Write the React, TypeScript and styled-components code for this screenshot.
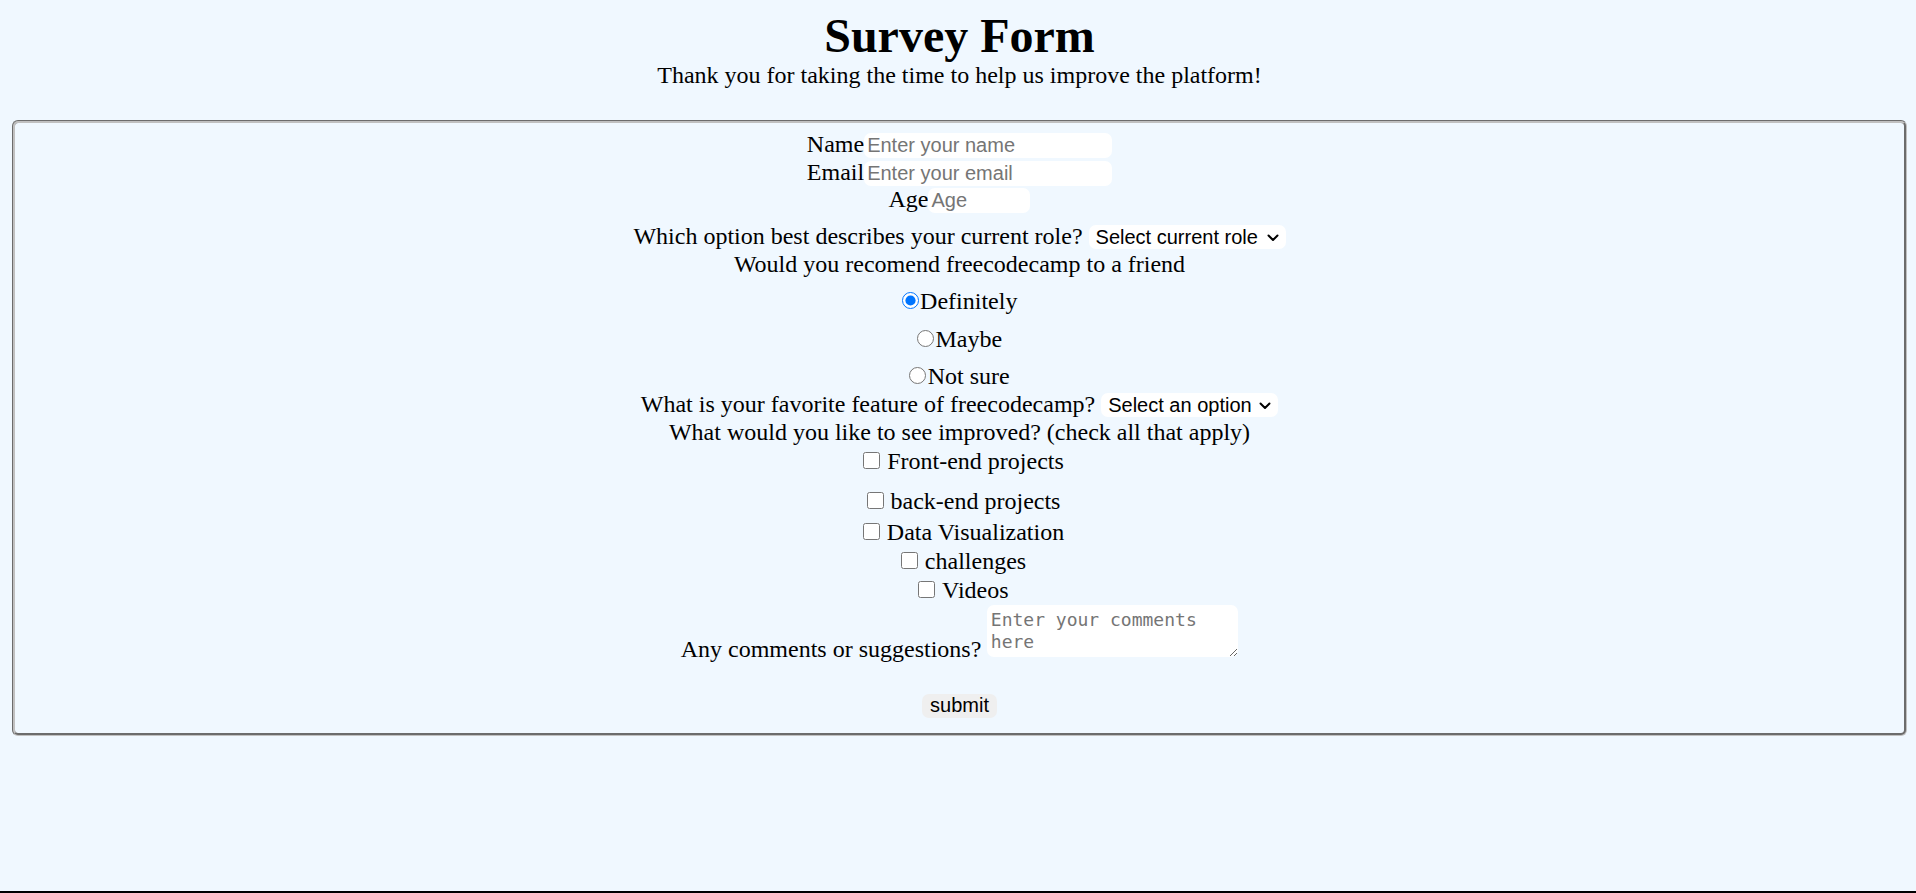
import React from "react";
import styled, { createGlobalStyle } from "styled-components";

const GlobalStyle = createGlobalStyle`
  html, body {
    margin: 0;
    padding: 0;
    background: #f0f8ff;
  }
  body {
    font-family: "Liberation Serif", "Times New Roman", serif;
    color: #000;
  }
  *, *::before, *::after {
    box-sizing: border-box;
  }
`;

const Page = styled.div`
  min-height: 100vh;
  padding: 9px 9px 0 12px;
  border-bottom: 2px solid #000;
  text-align: center;
`;

const Title = styled.h1`
  margin: 0;
  font-size: 48px;
  line-height: 53px;
  font-weight: 700;
`;

const Description = styled.p`
  margin: 0 0 30.4px;
  font-size: 24px;
  line-height: 27.6px;
`;

const Form = styled.form`
  margin: 0;
`;

const Fieldset = styled.fieldset`
  margin: 0;
  min-width: 0;
  padding: 8px 18px 14.4px;
  border: 3px groove #c0c0c0;
  border-radius: 6px;
  font-size: 24px;
  line-height: 27.6px;
  text-align: center;
`;

const FieldRow = styled.div`
  white-space: nowrap;
`;

const QuestionRow = styled.div<{ $top?: number }>`
  margin-top: ${(p) => p.$top ?? 0}px;
  white-space: nowrap;
`;

const Prompt = styled.div``;

const RadioRow = styled.div`
  padding-top: 10px;
`;

const CheckRow = styled.div<{ $before?: number; $after: number }>`
  margin-top: ${(p) => p.$before ?? 0}px;
  margin-bottom: ${(p) => p.$after}px;
`;

const CommentRow = styled.div`
  white-space: nowrap;
`;

const SubmitRow = styled.div`
  margin-top: 28.3px;
`;

const TextInput = styled.input<{ $w: number }>`
  width: ${(p) => p.$w}px;
  height: 25px;
  margin: 0;
  padding: 0 3px;
  border: none;
  border-radius: 7px;
  background: #fff;
  font-family: "Liberation Sans", Arial, sans-serif;
  font-size: 20px;
  color: #000;
  vertical-align: baseline;
  outline: none;
  &::placeholder {
    color: #757575;
  }
`;

const SelectWrap = styled.span`
  position: relative;
  display: inline-block;
  vertical-align: baseline;
`;

const Select = styled.select<{ $w: number }>`
  appearance: none;
  -webkit-appearance: none;
  width: ${(p) => p.$w}px;
  height: 24px;
  margin: 0;
  padding: 0 24px 0 7px;
  border: none;
  border-radius: 7px;
  background: #fff;
  font-family: "Liberation Sans", Arial, sans-serif;
  font-size: 20px;
  color: #000;
  vertical-align: baseline;
`;

const Chevron = styled.svg`
  position: absolute;
  right: 7px;
  top: 50%;
  width: 12px;
  height: 8px;
  margin-top: -3px;
  pointer-events: none;
`;

const Radio = styled.input`
  width: 17px;
  height: 17px;
  margin: 0 1.5px 1px 0;
  vertical-align: baseline;
`;

const Checkbox = styled.input`
  width: 17px;
  height: 17px;
  margin: 0 1px 0 8px;
  vertical-align: baseline;
`;

const Comments = styled.textarea`
  width: 251px;
  height: 52px;
  margin: 0;
  padding: 4px 3.5px;
  border: none;
  border-radius: 7px;
  background: #fff;
  font-family: "DejaVu Sans Mono", "Liberation Mono", monospace;
  font-size: 18px;
  line-height: 22px;
  vertical-align: baseline;
  &::placeholder {
    color: #757575;
  }
`;

const SubmitButton = styled.button`
  height: 24px;
  margin: 0;
  padding: 0 8.5px;
  border: none;
  border-radius: 7px;
  background: #efefef;
  font-family: "Liberation Sans", Arial, sans-serif;
  font-size: 20px;
  color: #000;
  vertical-align: baseline;
`;

const radios = [
  { label: "Definitely", checked: true },
  { label: "Maybe", checked: false },
  { label: "Not sure", checked: false },
];

const improvements = [
  { label: "Front-end projects", before: 2, after: 11.8 },
  { label: "back-end projects", before: 0, after: 3.4 },
  { label: "Data Visualization", before: 0, after: 1.4 },
  { label: "challenges", before: 0, after: 1.4 },
  { label: "Videos", before: 0, after: 0.4 },
];

function ChevronIcon() {
  return (
    <Chevron viewBox="0 0 12 8" aria-hidden="true">
      <path d="M1.5 1.5 L6 6 L10.5 1.5" fill="none" stroke="#000" strokeWidth="2" strokeLinecap="round" strokeLinejoin="round" />
    </Chevron>
  );
}

export default function App() {
  return (
    <>
      <GlobalStyle />
      <Page>
        <Title id="title">Survey Form</Title>
        <Description id="description">
          Thank you for taking the time to help us improve the platform!
        </Description>
        <Form id="survey-form" onSubmit={(e) => e.preventDefault()}>
          <Fieldset>
            <FieldRow>
              <label htmlFor="name">Name</label>
              <TextInput id="name" type="text" $w={248} placeholder="Enter your name" />
            </FieldRow>
            <FieldRow>
              <label htmlFor="email">Email</label>
              <TextInput id="email" type="email" $w={248} placeholder="Enter your email" />
            </FieldRow>
            <FieldRow>
              <label htmlFor="number">Age</label>
              <TextInput id="number" type="text" $w={102} placeholder="Age" />
            </FieldRow>
            <QuestionRow $top={9.3}>
              <label htmlFor="dropdown">Which option best describes your current role?</label>{" "}
              <SelectWrap>
                <Select id="dropdown" $w={197} defaultValue="">
                  <option value="" disabled>
                    Select current role
                  </option>
                  <option value="student">Student</option>
                  <option value="job">Full Time Job</option>
                  <option value="learner">Full Time Learner</option>
                  <option value="other">Other</option>
                </Select>
                <ChevronIcon />
              </SelectWrap>
            </QuestionRow>
            <Prompt>Would you recomend freecodecamp to a friend</Prompt>
            {radios.map((r) => (
              <RadioRow key={r.label}>
                <label>
                  <Radio type="radio" name="recommend" defaultChecked={r.checked} />
                  {r.label}
                </label>
              </RadioRow>
            ))}
            <QuestionRow>
              <label htmlFor="feature">What is your favorite feature of freecodecamp?</label>{" "}
              <SelectWrap>
                <Select id="feature" $w={177} defaultValue="">
                  <option value="" disabled>
                    Select an option
                  </option>
                  <option value="challenges">Challenges</option>
                  <option value="projects">Projects</option>
                  <option value="community">Community</option>
                  <option value="opensource">Open Source</option>
                </Select>
                <ChevronIcon />
              </SelectWrap>
            </QuestionRow>
            <Prompt>What would you like to see improved? (check all that apply)</Prompt>
            {improvements.map((c) => (
              <CheckRow key={c.label} $before={c.before} $after={c.after}>
                <label>
                  <Checkbox type="checkbox" value={c.label} /> {c.label}
                </label>
              </CheckRow>
            ))}
            <CommentRow>
              <label htmlFor="comments">Any comments or suggestions?</label>{" "}
              <Comments id="comments" placeholder="Enter your comments here" />
            </CommentRow>
            <SubmitRow>
              <SubmitButton type="submit" id="submit">
                submit
              </SubmitButton>
            </SubmitRow>
          </Fieldset>
        </Form>
      </Page>
    </>
  );
}
